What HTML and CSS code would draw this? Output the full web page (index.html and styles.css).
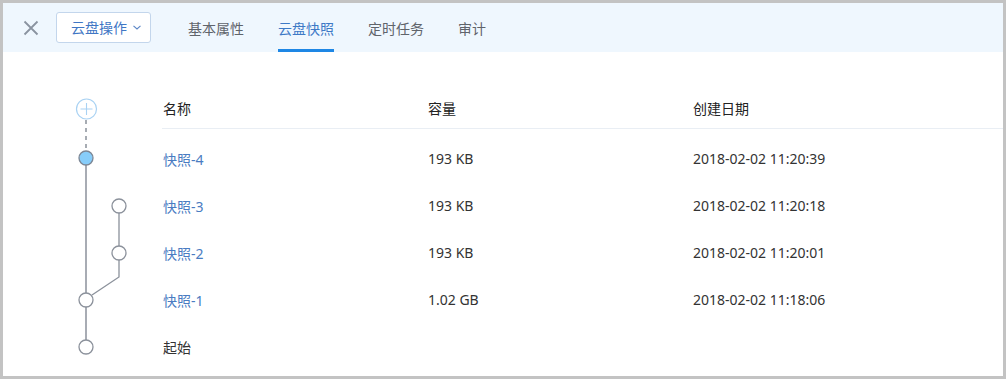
FILE: index.html
```html
<!DOCTYPE html>
<html lang="zh-CN">

<head>
    <meta charset="UTF-8">
    <title>云盘快照</title>
    <link rel="stylesheet" href="styles.css">
</head>

<body>
    <div class="frame">
        <!-- Barra superior -->
        <div class="topbar">
            <span class="close-btn">
                <svg width="16" height="16" viewBox="0 0 16 16">
                    <path d="M1.5 1.5 L14.5 14.5 M14.5 1.5 L1.5 14.5" stroke="#8a93a0" stroke-width="1.8" fill="none" />
                </svg>
            </span>
            <button class="ops-btn">云盘操作
                <svg class="chev" width="8" height="5" viewBox="0 0 8 5">
                    <path d="M0.5 0.8 L4 4 L7.5 0.8" stroke="#5b86c6" stroke-width="1.1" fill="none" />
                </svg>
            </button>
            <ul class="tabs">
                <li>基本属性</li>
                <li class="active">云盘快照</li>
                <li>定时任务</li>
                <li>审计</li>
            </ul>
        </div>

        <div class="content">
            <!-- Árbol de snapshots -->
            <div class="tree">
                <svg width="159" height="324" viewBox="0 0 159 324">
                    <circle cx="83.5" cy="57" r="10" fill="#fff" stroke="#a9d2f3" stroke-width="1.2" />
                    <path d="M77.5 57 H89.5 M83.5 51 V63" stroke="#a9d2f3" stroke-width="1.1" />
                    <path d="M83 68 V98" stroke="#8b919b" stroke-width="1.5" stroke-dasharray="4 4" />
                    <path d="M83 113 V288" stroke="#8b919b" stroke-width="1.5" />
                    <path d="M116 161 V194 M116 208 V225 L89 243" stroke="#8b919b" stroke-width="1.3" fill="none" />
                    <circle cx="83" cy="106" r="7" fill="#87cdfa" stroke="#7d8694" stroke-width="1.3" />
                    <circle cx="116" cy="154" r="7" fill="#fff" stroke="#8b919b" stroke-width="1.3" />
                    <circle cx="116" cy="201" r="7" fill="#fff" stroke="#8b919b" stroke-width="1.3" />
                    <circle cx="83" cy="248" r="7" fill="#fff" stroke="#8b919b" stroke-width="1.3" />
                    <circle cx="83" cy="295" r="7" fill="#fff" stroke="#8b919b" stroke-width="1.3" />
                </svg>
            </div>

            <div class="snap-table">
                <div class="row head">
                    <div>名称</div>
                    <div>容量</div>
                    <div>创建日期</div>
                </div>
                <div class="body">
                    <div class="row">
                        <div class="name">快照-4</div>
                        <div>193 KB</div>
                        <div>2018-02-02 11:20:39</div>
                    </div>
                    <div class="row">
                        <div class="name">快照-3</div>
                        <div>193 KB</div>
                        <div>2018-02-02 11:20:18</div>
                    </div>
                    <div class="row">
                        <div class="name">快照-2</div>
                        <div>193 KB</div>
                        <div>2018-02-02 11:20:01</div>
                    </div>
                    <div class="row">
                        <div class="name">快照-1</div>
                        <div>1.02 GB</div>
                        <div>2018-02-02 11:18:06</div>
                    </div>
                    <div class="row">
                        <div>起始</div>
                        <div></div>
                        <div></div>
                    </div>
                </div>
            </div>
        </div>
    </div>
</body>

</html>
```

FILE: styles.css
```css
/* Estilos generales */
body {
    margin: 0;
    font-family: "Noto Sans", "Noto Sans CJK SC", sans-serif;
    font-size: 14px;
    color: #333;
}

.frame {
    width: 1006px;
    height: 379px;
    box-sizing: border-box;
    border: 3px solid #c3c3c3;
    background-color: #fff;
    overflow: hidden;
}

/* Barra superior */
.topbar {
    height: 49px;
    background-color: #eff7fe;
    display: flex;
    align-items: center;
    padding-left: 19px;
}

.close-btn {
    width: 18px;
    height: 18px;
    display: flex;
    align-items: center;
    justify-content: center;
    margin-right: 16px;
}

.ops-btn {
    height: 31px;
    width: 95px;
    box-sizing: border-box;
    border: 1px solid #c3d6ec;
    border-radius: 3px;
    background-color: #fff;
    color: #4076c4;
    font-family: inherit;
    font-size: 14px;
    padding: 0 0 0 14px;
    display: flex;
    align-items: center;
    margin-top: -1px;
}

.chev {
    margin-left: 6px;
    margin-top: 1px;
}

.tabs {
    list-style: none;
    margin: 0 0 0 20px;
    padding: 0;
    display: flex;
    height: 100%;
}

.tabs li {
    padding: 0 17px;
    display: flex;
    align-items: center;
    color: #5f646b;
    position: relative;
}

.tabs li.active {
    color: #3d79c6;
}

.tabs li.active::after {
    content: "";
    position: absolute;
    left: 17px;
    right: 17px;
    bottom: 0;
    height: 3px;
    background-color: #1e87e5;
}

/* Contenido */
.content {
    display: flex;
}

.tree {
    width: 159px;
    flex-shrink: 0;
}

.tree svg {
    display: block;
}

.snap-table {
    flex: 1;
    padding-top: 36px;
}

.row {
    display: grid;
    grid-template-columns: 265px 265px 1fr;
    height: 47px;
    align-items: center;
}

.row > div {
    padding-left: 1px;
}

.row.head {
    height: 40px;
    border-bottom: 1.5px solid #e9eef4;
    color: #222;
}

.body {
    padding-top: 6px;
}

.name {
    color: #4a7cc2;
}
```
